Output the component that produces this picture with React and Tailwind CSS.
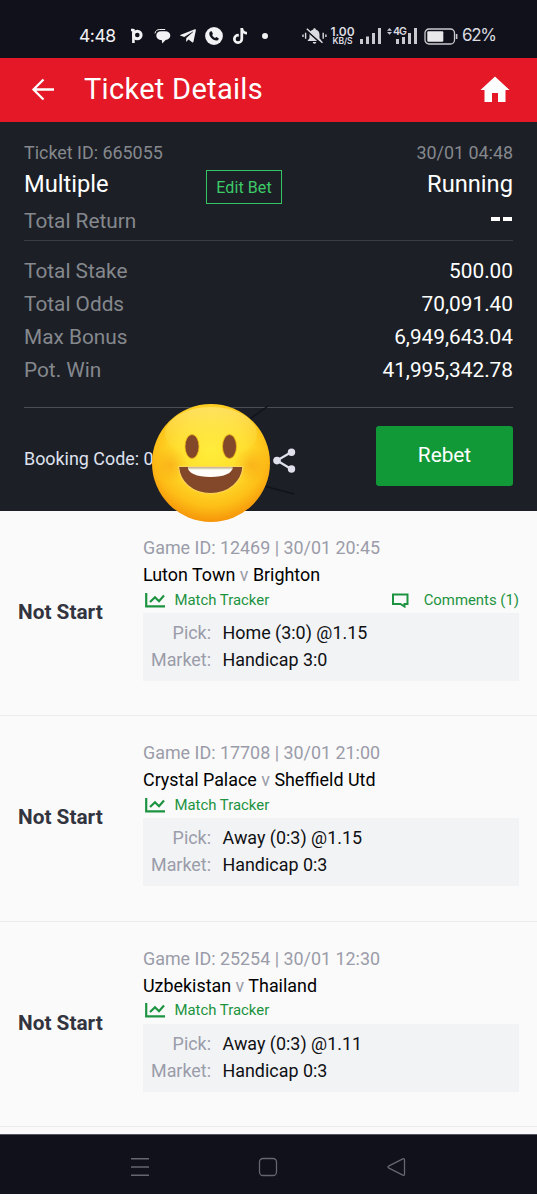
import React from 'react';
import { FaTelegramPlane, FaTiktok } from 'react-icons/fa';

const summary = [
  { label: 'Total Stake', value: '500.00' },
  { label: 'Total Odds', value: '70,091.40' },
  { label: 'Max Bonus', value: '6,949,643.04' },
  { label: 'Pot. Win', value: '41,995,342.78' },
];

const games = [
  { id: 12469, time: '30/01 20:45', home: 'Luton Town', away: 'Brighton', pick: 'Home (3:0) @1.15', market: 'Handicap 3:0', comments: 1 },
  { id: 17708, time: '30/01 21:00', home: 'Crystal Palace', away: 'Sheffield Utd', pick: 'Away (0:3) @1.15', market: 'Handicap 0:3', comments: 0 },
  { id: 25254, time: '30/01 12:30', home: 'Uzbekistan', away: 'Thailand', pick: 'Away (0:3) @1.11', market: 'Handicap 0:3', comments: 0 },
];

const StatusBar = () => (
  <div className="h-[58px] shrink-0 bg-[#11111b] pt-[14px] pl-[79px]">
    <div className="h-11 flex items-center text-[#f2f2f4] font-['Inter',sans-serif]">
      <span className="w-[52px] shrink-0 text-[17.5px] tracking-[-0.45px]">4:48</span>
      {/* payment app */}
      <svg className="shrink-0" width="12" height="16" viewBox="0 0 12 16" fill="none" stroke="currentColor">
        <path d="M0 2h2.500M2.400 1v14" strokeWidth="2.600" />
        <circle cx="6.300" cy="7" r="3.800" strokeWidth="3" />
      </svg>
      {/* messages */}
      <svg className="ml-[11px] shrink-0" width="17" height="16" viewBox="0 0 17 16" fill="currentColor">
        <path d="M7 3.200h4.200c3.100 0 5.100 1.700 5.100 4.200s-1.900 4.200-4.700 4.600L8.300 15.400l-.6-3.300C4.400 12 2.300 10.200 2.300 7.500s1.800-4.300 4.700-4.300z" />
        <path d="M1 5.400C1.300 2.800 3.200 1.500 5.800 1.500h5.400" fill="none" stroke="currentColor" strokeWidth="1" />
      </svg>
      <FaTelegramPlane className="ml-[8px] shrink-0" size={18} />
      {/* whatsapp disc with a dark handset */}
      <svg className="ml-[8px] shrink-0" width="18" height="18" viewBox="0 0 18 18">
        <circle cx="9" cy="9" r="8.900" fill="currentColor" />
        <path d="M5.300 4.600l1.400-.4 1.300 2.700-.9 1.200c.7 1.400 1.700 2.300 3 2.900l1.100-1.100 2.500 1.300c.1 1.500-1.200 2.400-2.400 2.300-3.700-.4-7-3.800-7-7 0-.8.400-1.500 1-1.900z" fill="#11111b" />
      </svg>
      <FaTiktok className="ml-[9px] shrink-0" size={16} />
      <span className="ml-[14px] size-[6px] shrink-0 rounded-full bg-current" />

      {/* muted bell */}
      <svg className="ml-[34px] shrink-0" width="25" height="18" viewBox="0 0 25 18" fill="#dcdce0">
        <path d="M12.500 1.200c.8 0 1.200.5 1.200 1.200 2.400.6 3.800 2.400 3.800 5v3.800l1.700 2v.9H5.800v-.9l1.700-2V7.400c0-2.600 1.400-4.400 3.800-5 0-.7.400-1.200 1.200-1.200zM10.800 15h3.400c0 1-.7 1.700-1.700 1.700s-1.700-.7-1.700-1.700z" />
        <path d="M4.200 3.100l15.400 13.700" stroke="#11111b" strokeWidth="1.600" />
        <path d="M4.800 1.800l15.700 14" stroke="#dcdce0" strokeWidth="1.500" />
        <path d="M1 7.500v2.600M3.600 5.800v6M21.200 5.800v6M23.900 7.500v2.600" stroke="#dcdce0" strokeWidth="1.400" />
      </svg>
      <div className="ml-[3px] w-[25px] shrink-0 text-center whitespace-nowrap text-[#dcdce0] font-semibold">
        <div className="text-[12px] leading-[11px] tracking-[-0.100px]">1.00</div>
        <div className="text-[8.500px] leading-[9px] tracking-[-0.100px]">KB/S</div>
      </div>
      <svg className="ml-[5px] shrink-0" width="22" height="16" viewBox="0 0 22 16" fill="#c9c9cf">
        <path d="M0 11h3v5H0zM6 8.500h3V16H6zM12 5h3v11h-3zM18 0h3v16h-3z" />
      </svg>
      {/* second sim with the data badge over the bars */}
      <div className="relative ml-[5px] w-[31px] h-4 shrink-0">
        <svg width="31" height="16" viewBox="0 0 31 16" fill="#c9c9cf">
          <path d="M2.500 0l2.500 2.700H0zM2.500 6.800l2.500-2.700H0z" />
          <path d="M9 11h3v5H9zM15 9h3v7h-3zM21 5h3v11h-3zM27 0h3v16h-3z" />
        </svg>
        <span className="absolute left-[6px] -top-[1px] text-[10.500px] leading-[9px] font-semibold text-[#dcdce0] tracking-[-0.900px] bg-[#11111b]">4G</span>
      </div>
      <svg className="ml-[6px] shrink-0" width="34" height="17" viewBox="0 0 34 17" fill="none">
        <rect x="1" y="1" width="29.500" height="15" rx="4" stroke="#c9c9cf" strokeWidth="1.300" />
        <rect x="3.300" y="3.300" width="16" height="10.400" rx="1" fill="#e8e8ea" />
        <path d="M32.600 6v5" stroke="#c9c9cf" strokeWidth="1.600" />
      </svg>
      <span className="ml-[4px] text-[17px] tracking-[-1.300px] text-[#dcdce0]">62%</span>
    </div>
  </div>
);

const Header = () => (
  <div className="h-16 shrink-0 bg-[#e41827] flex items-center pl-[31px] pr-[27px] text-white">
    <svg width="24" height="24" viewBox="0 0 24 24" fill="none" stroke="currentColor" strokeWidth="2.300">
      <path d="M23 11.500H2M12.500 1.500l-10 10 10 10" />
    </svg>
    <h1 className="ml-[29px] text-[29px] leading-8 tracking-[0.3px] -mt-[2px]">Ticket Details</h1>
    <svg className="ml-auto -mt-[2px]" width="30" height="27" viewBox="0 0 30 27" fill="currentColor">
      <path d="M15 0.500L29.500 14H25.500V26H18V17H12V26H4.500V14H0.500z" />
    </svg>
  </div>
);

// Smiley sticker that hides the booking code
const Smiley = () => (
  <svg className="absolute left-[127px] -top-[5.500px]" width="120" height="120" viewBox="0 0 120 120">
    <defs>
      <radialGradient id="face" cx="0.5" cy="0.39" r="0.64">
        <stop offset="0" stopColor="#ffee3a" />
        <stop offset="0.45" stopColor="#ffde2c" />
        <stop offset="0.75" stopColor="#fdbe17" />
        <stop offset="1" stopColor="#f48b06" />
      </radialGradient>
      <linearGradient id="shine" x1="0" y1="0" x2="0" y2="1">
        <stop offset="0" stopColor="#ffe67c" stopOpacity="0.7" />
        <stop offset="1" stopColor="#ffe533" stopOpacity="0" />
      </linearGradient>
      <radialGradient id="cheek">
        <stop offset="0" stopColor="#f79a10" stopOpacity="0.5" />
        <stop offset="1" stopColor="#f79a10" stopOpacity="0" />
      </radialGradient>
    </defs>
    <circle cx="60" cy="60" r="59" fill="url(#face)" />
    <ellipse cx="60" cy="31" rx="46" ry="27" fill="url(#shine)" />
    <circle cx="20" cy="62" r="18" fill="url(#cheek)" />
    <circle cx="100" cy="62" r="18" fill="url(#cheek)" />
    <ellipse cx="41" cy="43.500" rx="7" ry="12" fill="#83482a" stroke="#f6b914" strokeWidth="0.800" />
    <ellipse cx="78.500" cy="43.500" rx="7" ry="12" fill="#83482a" stroke="#f6b914" strokeWidth="0.800" />
    <path d="M27.500 63.500h64.500c-1 15-14 27-32.500 27s-31-12-32-27z" fill="#83482a" stroke="#ffd75a" strokeWidth="1.200" />
    <path d="M37 64.500h44.500c0 5.500-8 9.500-22 9.500S37 70 37 64.500z" fill="#fffefa" />
    <path d="M37 64.500h44.500v1.800H37z" fill="#d8d2b4" />
  </svg>
);

const TicketSummary = () => (
  <div className="h-[389px] shrink-0 bg-[#1c1f26] px-6 pt-[21px] text-[#85888d]">
    <div className="flex justify-between text-[17.900px] leading-5">
      <span>Ticket ID: 665055</span>
      <span>30/01 04:48</span>
    </div>
    <div className="grid grid-cols-[182px_76px_1fr] h-[43px] items-center text-[23.700px] text-white">
      <span className="pt-[1px]">Multiple</span>
      <button className="mt-[5px] h-[34px] pt-[1px] border border-[#35c463] text-[16px] tracking-[0.1px] text-[#3ccb68]">Edit Bet</button>
      <span className="pt-[1px] text-right">Running</span>
    </div>
    <div className="h-[35px] pt-[2px] flex justify-between border-b border-[#3a3d43] text-[20.800px] leading-[26px]">
      <span>Total Return</span>
      <span className="flex gap-[3px] pt-[9px] pr-[1px]">
        <i className="w-[9px] h-[4px] bg-white" />
        <i className="w-[9px] h-[4px] bg-white" />
      </span>
    </div>
    <div className="h-[167px] pt-[13.500px] border-b border-[#4b4e53] text-[20.800px] leading-[33px]">
      {summary.map((row) => (
        <div key={row.label} className="flex justify-between">
          <span>{row.label}</span>
          <span className="text-white">{row.value}</span>
        </div>
      ))}
    </div>
    <div className="relative flex pt-[18px] text-[17.900px] text-[#dfe1ee]">
      <span className="mt-[21px] leading-6">Booking Code: 0</span>
      {/* sticker edge strokes */}
      <svg className="absolute left-[226px] -top-[4px]" width="45" height="92" viewBox="0 0 45 92" stroke="#11131a" strokeWidth="1.500">
        <path d="M0 15L18 2M14 82l30 8" />
      </svg>
      <Smiley />
      <svg className="absolute left-[249px] top-[40px]" width="23" height="26" viewBox="0 0 23 26" fill="#dfe0ec">
        <path d="M18.500 4L4 12.500l14.500 8.800" fill="none" stroke="#dfe0ec" strokeWidth="2.200" />
        <circle cx="18.500" cy="4.200" r="3.700" />
        <circle cx="4" cy="12.600" r="3.800" />
        <circle cx="18.500" cy="21" r="3.700" />
      </svg>
      <button className="ml-auto w-[137px] h-[60px] pb-[1px] rounded-[3px] bg-[#119837] text-white text-[20.800px]">Rebet</button>
    </div>
  </div>
);

const GameRow = ({ game }) => (
  <div className="h-[205.4px] shrink-0 flex border-b border-[#ebecee] pr-[18px] text-[#9a9ca9]">
    <div className="w-[143px] pl-[18px] pt-[88px] text-[20.800px] leading-[26px] font-bold text-[#32343f]">Not Start</div>
    <div className="flex-1 pt-[24px] text-[17.900px] leading-[27px]">
      <div className="leading-[26px]">Game ID: {game.id} | {game.time}</div>
      <div className="text-black">
        {game.home} <span className="text-[#9a9ca9]">v</span> {game.away}
      </div>
      <div className="flex items-center h-[25px] pb-[1px] text-[14.900px] text-[#1c9340]">
        <svg className="ml-[2px] mr-[8.500px]" width="21" height="15" viewBox="0 0 21 15" fill="none" stroke="currentColor" strokeWidth="2.200">
          <path d="M1.200 0v13.400H20M5 9L10 4.200l4 4L19 2.600" />
        </svg>
        <span>Match Tracker</span>
        {game.comments > 0 && (
          <span className="ml-auto flex items-center">
            <svg className="mr-[15px]" width="17" height="15" viewBox="0 0 17 15" fill="none" stroke="currentColor" strokeWidth="2">
              <path d="M1 1.500h14.500v9.500h-3v2.500L8.500 11H1z" />
            </svg>
            <span>Comments ({game.comments})</span>
          </span>
        )}
      </div>
      <div className="h-[68px] pt-[6px] bg-[#f2f3f5] grid grid-cols-[68px_1fr] gap-x-[11.500px] auto-rows-[27px]">
        <span className="text-right">Pick:</span>
        <span className="text-[#0f1013]">{game.pick}</span>
        <span className="text-right">Market:</span>
        <span className="text-[#0f1013]">{game.market}</span>
      </div>
    </div>
  </div>
);

const NavBar = () => (
  <div className="h-[60px] shrink-0 border-t border-[#55565f] bg-[#11111b] flex items-center pt-[5px] pl-[130px] gap-[108px]">
    <svg width="20" height="20" viewBox="0 0 20 20" stroke="#666672" strokeWidth="1.600">
      <path d="M1 1.800h18M1 10h18M1 18.200h18" />
    </svg>
    <svg width="20" height="20" viewBox="0 0 20 20" fill="none" stroke="#666672" strokeWidth="1.300">
      <rect x="1.500" y="1.500" width="17" height="17" rx="3.500" />
    </svg>
    <svg width="20" height="20" viewBox="0 0 20 20" fill="none" stroke="#666672" strokeWidth="1.300" strokeLinejoin="round">
      <path d="M16.800 1.800L2.500 9.200q-1 .8 0 1.600l14.300 7.400q1.700.5 1.700-1.200V3q0-1.700-1.700-1.200z" />
    </svg>
  </div>
);

export default function App() {
  return (
    <div className="w-full h-[1200px] flex flex-col overflow-hidden bg-[#fafafa] font-[Roboto,sans-serif]">
      <StatusBar />
      <Header />
      <TicketSummary />
      {games.map((game) => (
        <GameRow key={game.id} game={game} />
      ))}
      <div className="h-[6.8px] shrink-0" />
      <NavBar />
    </div>
  );
}
